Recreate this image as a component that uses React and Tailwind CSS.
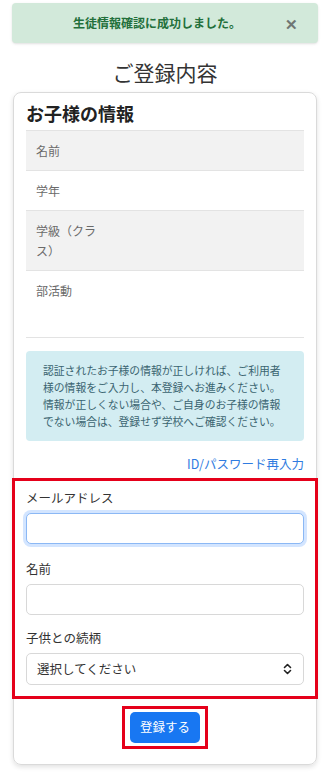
import React from "react";

const font = { fontFamily: '"Noto Sans CJK JP", "Noto Sans", sans-serif' };

const rows = [
    { label: "名前", h: "h-[40px]", bg: "bg-[#f2f2f2]" },
    { label: "学年", h: "h-[40px]", bg: "bg-white" },
    { label: "学級（クラス）", h: "h-[60px]", bg: "bg-[#f2f2f2]" },
    { label: "部活動", h: "h-[67px]", bg: "bg-white" },
];

const Field = ({ label, children, top }) => (
    <div className={top}>
        <label className="block h-[18px] leading-[18px] text-[12.5px] text-[#333] mb-[6px]">{label}</label>
        {children}
    </div>
);

const App = () => {
    return (
        <div className="min-h-screen bg-white pb-[18px]" style={font}>
            <div className="mx-[12px] pt-[3px]">
                <div className="h-[40px] bg-[#d2e9da] rounded-[4px] shadow-sm flex items-center justify-between pl-[61px] pr-[20px]">
                    <span className="text-[12px] font-bold text-[#23703b]">生徒情報確認に成功しました。</span>
                    <span className="text-[15px] font-bold text-[#6f7673] leading-none">✕</span>
                </div>
            </div>

            <h1 className="mt-[14px] mb-[5px] h-[30px] leading-[30px] text-center text-[21px] text-[#333]">ご登録内容</h1>

            <div className="mx-[13px] border border-[#dadada] rounded-[8px] shadow-[0_2px_5px_rgba(0,0,0,0.12)] px-[12px] pt-[7px] pb-[15px]">
                <h2 className="h-[26px] leading-[26px] text-[18px] font-bold text-[#222] mb-[4px]">お子様の情報</h2>

                <div className="border-b border-[#e3e3e3]">
                    {rows.map((r) => (
                        <div key={r.label} className={`flex border-t border-[#e3e3e3] ${r.h} ${r.bg}`}>
                            <div className="w-[85px] px-[10px] pt-[10px] text-[12px] leading-[20px] text-[#6a6a6a]">{r.label}</div>
                            <div className="flex-1"></div>
                        </div>
                    ))}
                </div>

                <div className="mt-[13px] h-[90px] bg-[#d3edf2] rounded-[4px] px-[17px] py-[11px] text-[10.8px] leading-[17px] text-[#3a6470] whitespace-nowrap">
                    認証されたお子様の情報が正しければ、ご利用者<br />
                    様の情報をご入力し、本登録へお進みください。<br />
                    情報が正しくない場合や、ご自身のお子様の情報<br />
                    でない場合は、登録せず学校へご確認ください。
                </div>

                <div className="mt-[13px] mb-[4px] h-[20px] leading-[20px] text-right text-[12.5px] text-[#2f7be0]">ID/パスワード再入力</div>

                <div className="-mx-[14px] border-[3px] border-[#e5001a] px-[11px] pt-[8px] pb-[11px]">
                    <Field label="メールアドレス">
                        <div className="h-[31px] rounded-[5px] border border-[#8bb8f5] shadow-[0_0_0_3px_rgba(13,110,253,0.18)] bg-white"></div>
                    </Field>
                    <Field label="名前" top="mt-[16px]">
                        <div className="h-[31px] rounded-[5px] border border-[#d8d8d8] bg-white"></div>
                    </Field>
                    <Field label="子供との続柄" top="mt-[14px]">
                        <div className="h-[32px] rounded-[5px] border border-[#d8d8d8] bg-white flex items-center justify-between pl-[10px] pr-[11px]">
                            <span className="text-[12.5px] text-[#333]">選択してください</span>
                            <svg width="9" height="12" viewBox="0 0 9 12" fill="none" stroke="#222" strokeWidth="1.6" strokeLinecap="round" strokeLinejoin="round">
                                <path d="M1.5 4.5 L4.5 1.5 L7.5 4.5" />
                                <path d="M1.5 7.5 L4.5 10.5 L7.5 7.5" />
                            </svg>
                        </div>
                    </Field>
                </div>

                <div className="mt-[7px] flex justify-center">
                    <div className="border-[3px] border-[#e5001a] px-[5px] py-[3px]">
                        <button className="w-[70px] h-[31px] rounded-[5px] bg-[#1877f2] text-white text-[12.5px]">登録する</button>
                    </div>
                </div>
            </div>
        </div>
    );
};

export default App;
